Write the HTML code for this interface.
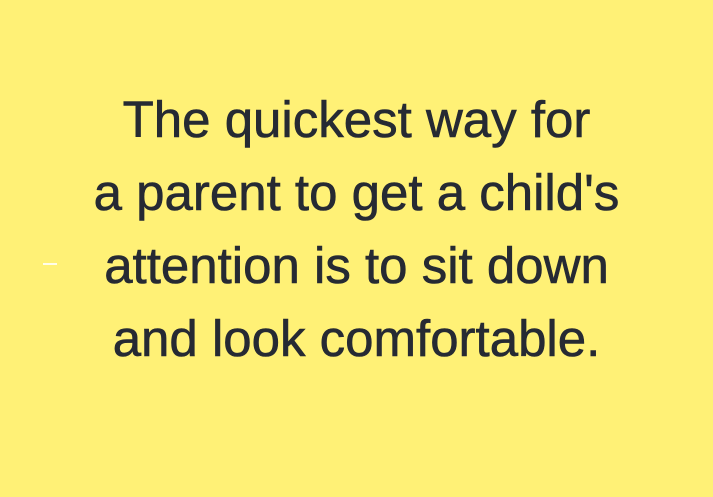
<!DOCTYPE html>
<html><head><meta charset="utf-8"><style>
html,body{margin:0;padding:0;width:713px;height:497px;background:#FFF176;overflow:hidden}
.t{position:absolute;left:0;top:83px;width:713px;text-align:center;font-family:"Liberation Sans",sans-serif;font-size:51px;line-height:73px;color:#262a33;font-weight:normal;-webkit-text-stroke:0.6px #262a33}
.m{position:absolute;left:43px;top:263px;width:14px;height:2px;background:#fff;opacity:.85}
</style></head><body>
<div class="m"></div>
<div class="t">The quickest way for<br>a parent to get a child's<br>attention is to sit down<br>and look comfortable.</div>
</body></html>
